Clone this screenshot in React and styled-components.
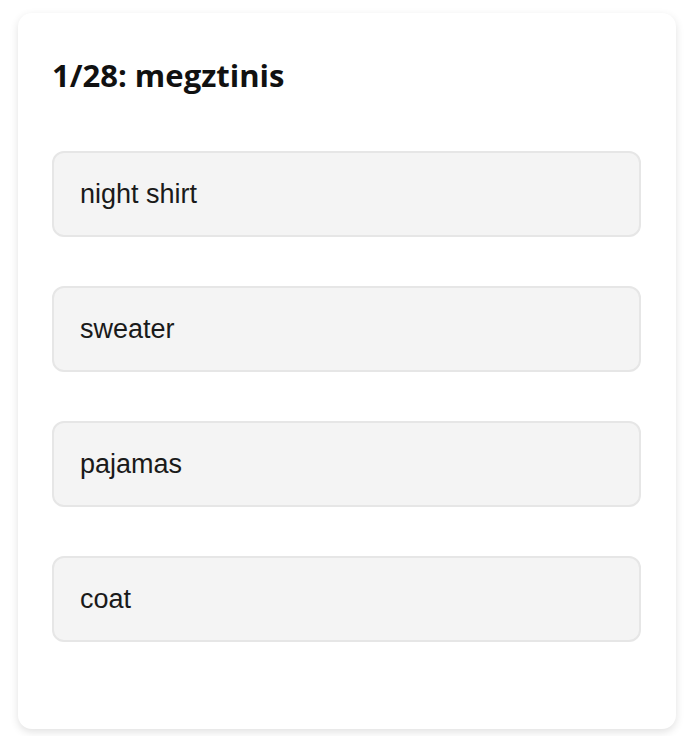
import React from 'react';
import styled, { createGlobalStyle } from 'styled-components';

const GlobalStyle = createGlobalStyle`
  html, body {
    margin: 0;
    padding: 0;
    background: #ffffff;
  }
`;

const Page = styled.div`
  padding: 13px 10px 8px 18px;
`;

const Card = styled.div`
  background: #ffffff;
  border-radius: 14px;
  box-shadow: 0 3px 9px rgba(0, 0, 0, 0.12);
  padding: 42px 35px 87px 34px;
`;

const Title = styled.h2`
  margin: 0 0 56px;
  font-family: "Open Sans", "Noto Sans", sans-serif;
  font-weight: 700;
  font-size: 31px;
  line-height: 40px;
  color: #111111;
`;

const Options = styled.div`
  display: flex;
  flex-direction: column;
  gap: 49px;
`;

const Option = styled.button`
  display: flex;
  align-items: center;
  height: 86px;
  box-sizing: border-box;
  padding: 0 0 0 26px;
  background: #f4f4f4;
  border: 2px solid #e6e6e6;
  border-radius: 12px;
  font-family: "Liberation Sans", Arial, sans-serif;
  font-size: 27px;
  color: #1a1a1a;
  text-align: left;
  cursor: pointer;
`;

const words = ['night shirt', 'sweater', 'pajamas', 'coat'];

export default function App() {
  return (
    <>
      <GlobalStyle />
      <Page>
        <Card>
          <Title>1/28: megztinis</Title>
          <Options>
            {words.map((w) => (
              <Option key={w}>{w}</Option>
            ))}
          </Options>
        </Card>
      </Page>
    </>
  );
}
